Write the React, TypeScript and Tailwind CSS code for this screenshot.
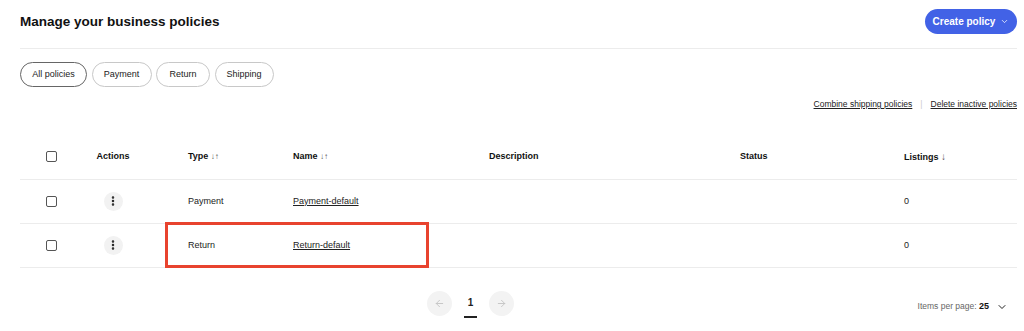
import { ArrowLeft, ArrowRight, ChevronDown, EllipsisVertical } from 'lucide-react';

const ROWS = [
  { type: 'Payment', name: 'Payment-default', listings: '0', marked: false },
  { type: 'Return', name: 'Return-default', listings: '0', marked: true },
];

const FILTERS = [
  { label: 'All policies', w: 'w-[67px]' },
  { label: 'Payment', w: 'w-[60px]' },
  { label: 'Return', w: 'w-[54px]' },
  { label: 'Shipping', w: 'w-[59px]' },
];

const COLS = 'grid grid-cols-[63px_60px_150px_196px_251px_164px_1fr] items-center';

function Checkbox() {
  return <div className="w-[11px] h-[11px] rounded-[2px] border border-[#555] bg-white" />;
}

export default function App() {
  return (
    <div
      className="w-[1024px] h-[331px] bg-white pl-[20px] pr-[7px] text-[#222] overflow-hidden"
      style={{ fontFamily: '"Liberation Sans", Arial, sans-serif' }}
    >
      {/* Header */}
      <div className="h-[49px] flex items-center justify-between border-b border-[#ececec]">
        <h1 className="text-[13.5px] font-bold text-[#111] -mt-[3px]">Manage your business policies</h1>
        <button className="h-[25px] w-[92px] -mt-[5px] rounded-full bg-[#4262e6] text-white text-[10px] font-bold flex items-center justify-center gap-[5px]">
          Create policy
          <ChevronDown className="w-[9px] h-[9px]" strokeWidth={2} />
        </button>
      </div>

      {/* Filter pills */}
      <div className="flex gap-[4.5px] mt-[13px]">
        {FILTERS.map((f, i) => (
          <button
            key={f.label}
            className={`h-[25px] ${f.w} rounded-full text-[9px] text-[#222] bg-white border ${
              i === 0 ? 'border-[#666]' : 'border-[#c8c8c8]'
            }`}
          >
            {f.label}
          </button>
        ))}
      </div>

      {/* Bulk links */}
      <div className="flex justify-end items-center gap-[8px] mt-[11px] text-[8.5px] text-[#222]">
        <span className="underline">Combine shipping policies</span>
        <span className="text-[#ccc]">|</span>
        <span className="underline">Delete inactive policies</span>
      </div>

      {/* Table */}
      <div className="mt-[23px]">
        <div className={`${COLS} h-[46px] border-b border-[#ececec] text-[9px] font-bold text-[#111]`}>
          <div className="flex justify-center"><Checkbox /></div>
          <div className="text-center">Actions</div>
          <div className="pl-[45px]">Type <span className="text-[8px] font-normal text-[#555]">↓↑</span></div>
          <div>Name <span className="text-[8px] font-normal text-[#555]">↓↑</span></div>
          <div>Description</div>
          <div>Status</div>
          <div>Listings <span className="text-[10px] font-normal text-[#555]">↓</span></div>
        </div>
        {ROWS.map(r => (
          <div key={r.name} className={`${COLS} h-[44px] border-b border-[#ececec] text-[9px] text-[#222] relative`}>
            <div className="flex justify-center"><Checkbox /></div>
            <div className="flex justify-center">
              <div className="w-[19px] h-[19px] rounded-full bg-[#f2f2f2] flex items-center justify-center">
                <EllipsisVertical className="w-[12px] h-[12px] text-[#222]" strokeWidth={3} />
              </div>
            </div>
            <div className="pl-[45px]">{r.type}</div>
            <div className="underline">{r.name}</div>
            <div />
            <div />
            <div>{r.listings}</div>
            {r.marked && (
              <div className="absolute left-[145px] top-[-2px] w-[264px] h-[46px] border-[3px] border-[#e8432e]" />
            )}
          </div>
        ))}
      </div>

      {/* Pagination */}
      <div className="relative h-[63px] flex items-start pt-[23px] pl-[407px]">
        <div className="flex items-start gap-[12px]">
          <div className="w-[25px] h-[25px] rounded-full bg-[#f3f3f3] flex items-center justify-center">
            <ArrowLeft className="w-[11px] h-[11px] text-[#c4c4c4]" strokeWidth={2} />
          </div>
          <div className="flex flex-col items-center w-[13px] pt-[6px]">
            <span className="text-[10px] font-bold leading-[12px] text-[#222]">1</span>
            <div className="w-[13px] h-[2px] bg-[#222] mt-[7px]" />
          </div>
          <div className="w-[25px] h-[25px] rounded-full bg-[#f3f3f3] flex items-center justify-center">
            <ArrowRight className="w-[11px] h-[11px] text-[#c4c4c4]" strokeWidth={2} />
          </div>
        </div>
        <div className="absolute right-[9px] top-[32px] flex items-center gap-[7px] text-[8.5px] text-[#666]">
          <span>Items per page: <b className="text-[#111] text-[9px]">25</b></span>
          <ChevronDown className="w-[12px] h-[12px] text-[#222]" strokeWidth={2} />
        </div>
      </div>
    </div>
  );
}
